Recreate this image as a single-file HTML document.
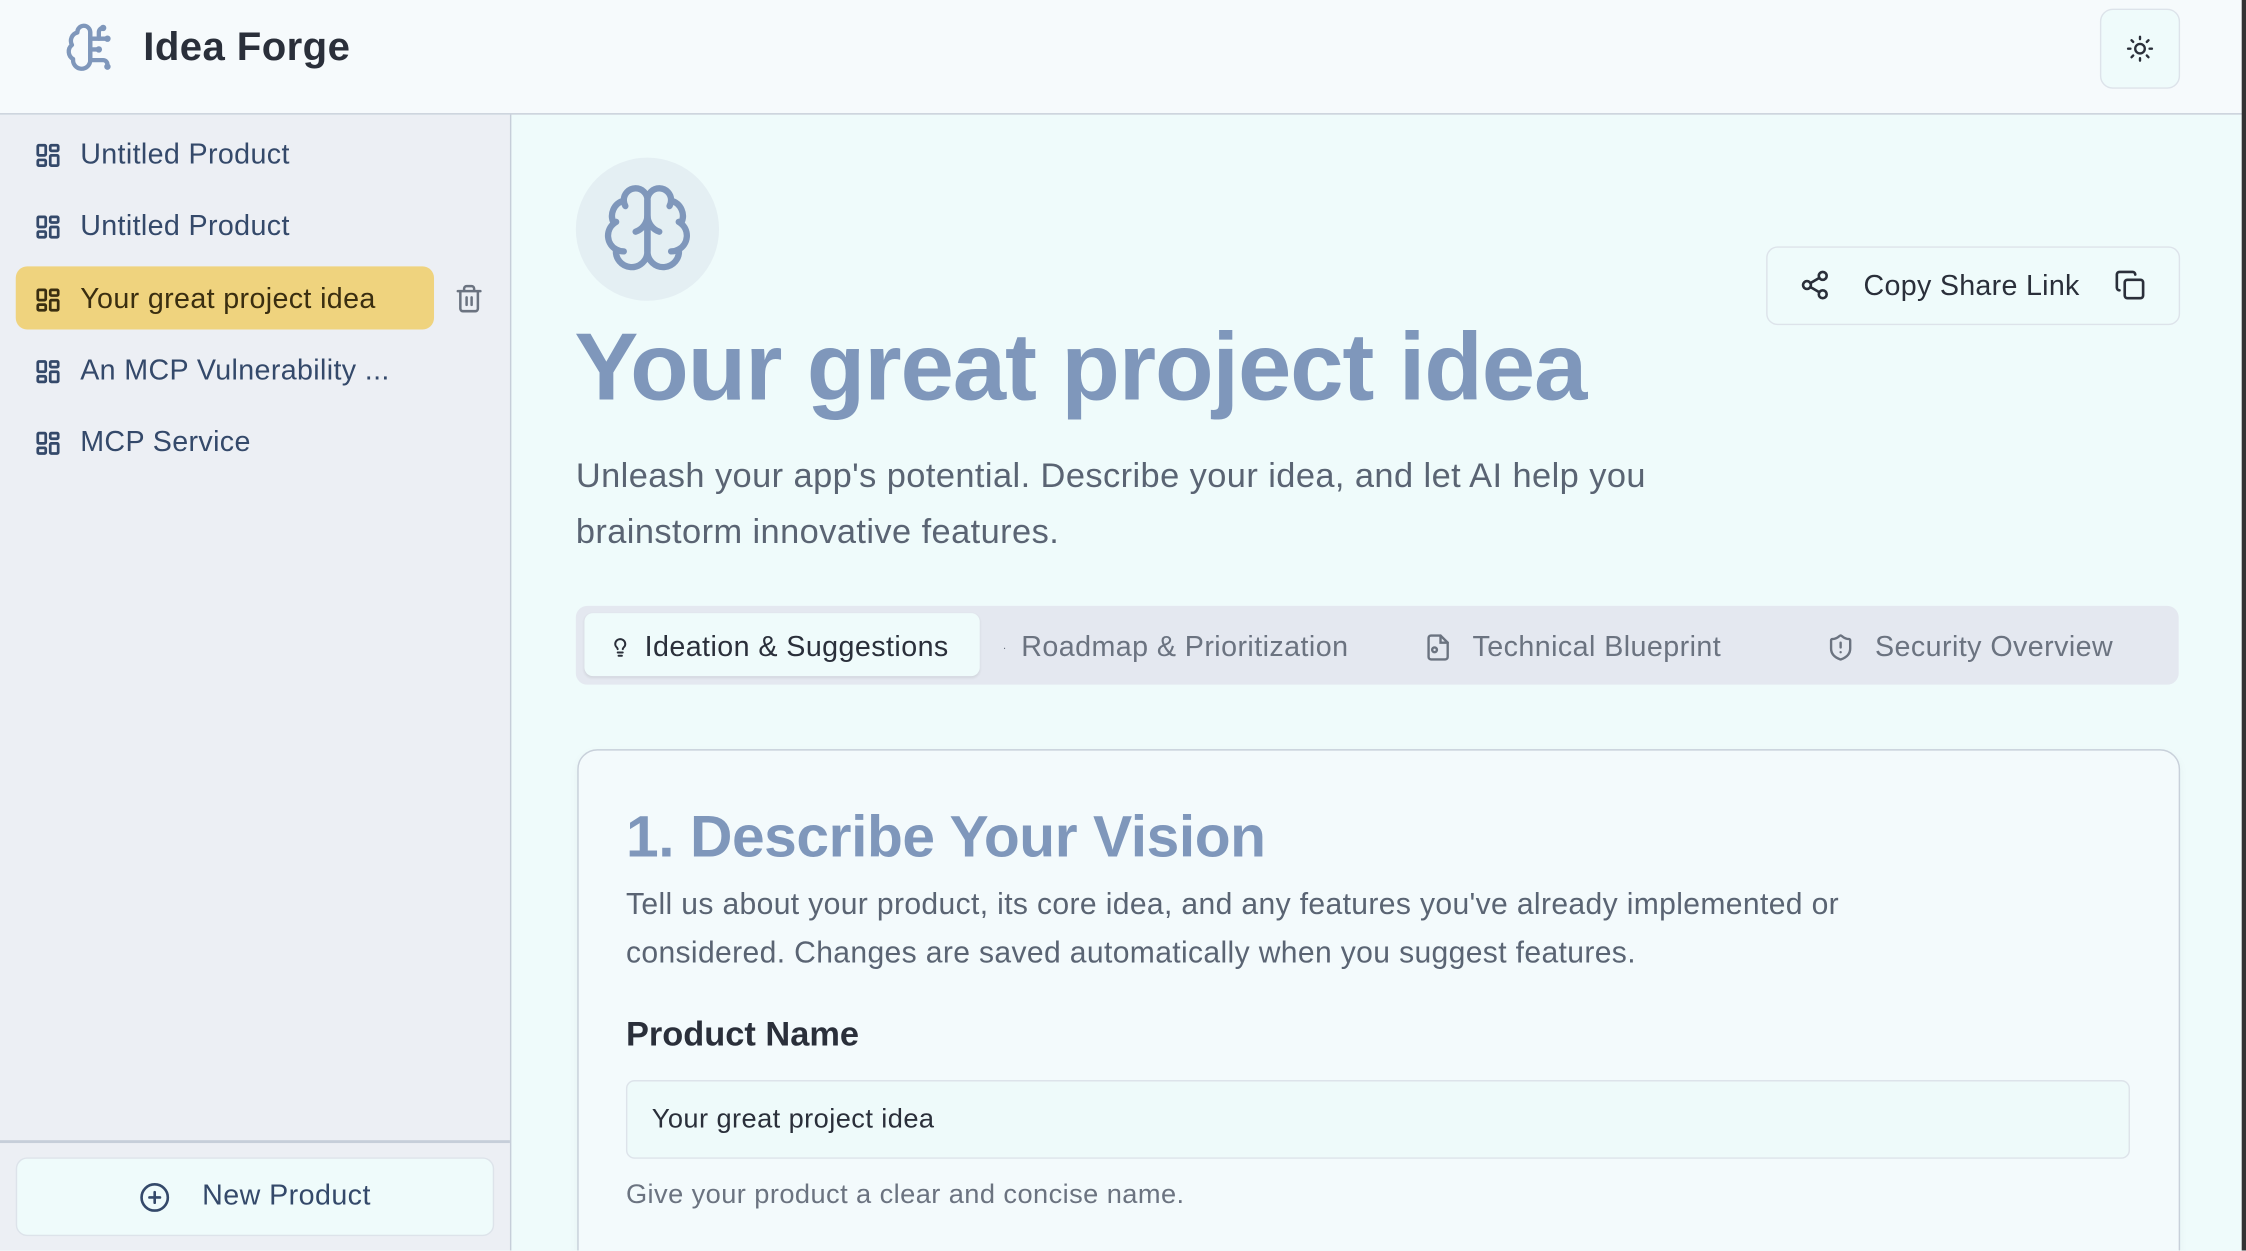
<!DOCTYPE html>
<html><head><meta charset="utf-8"><style>
html,body{margin:0;padding:0;width:2246px;height:1250px;overflow:hidden;background:#effbfb;}
#w{position:absolute;left:0;top:0;width:1568px;height:873px;transform:scale(1.43240);transform-origin:0 0;font-family:"Liberation Sans",sans-serif;background:#effbfb;overflow:hidden;}
.a{position:absolute;}
.hdr{left:0;top:0;width:1568px;height:79px;background:#f6fafc;border-bottom:1.5px solid #c6ced9;}
.side{left:0;top:80px;width:356px;height:793px;background:#eceff4;border-right:1.5px solid #c6ced9;}
.item{position:absolute;left:24px;font-size:20px;letter-spacing:.25px;color:#34496a;display:flex;align-items:center;gap:13px;height:24px;}
.tab{position:absolute;top:0;height:44px;display:flex;align-items:center;gap:10px;font-size:20px;letter-spacing:.3px;color:#6b7380;}
svg{display:block}
</style></head><body><div id="w">
<div class="a hdr"></div>
<svg class="a" style="left:45px;top:15px" width="36" height="36" viewBox="0 0 24 24" fill="none" stroke="#7f97bb" stroke-width="2" stroke-linecap="round" stroke-linejoin="round"><path d="M12 5a3 3 0 1 0-5.997.125 4 4 0 0 0-2.526 5.77 4 4 0 0 0 .556 6.588A4 4 0 1 0 12 18Z"/><path d="M12 13h4"/><path d="M12 18h6a2 2 0 0 1 2 2v1"/><path d="M12 8h8"/><path d="M16 8V5a2 2 0 0 1 2-2"/><circle cx="16" cy="13" r=".5"/><circle cx="18" cy="3" r=".5"/><circle cx="20" cy="21" r=".5"/><circle cx="20" cy="8" r=".5"/><path d="M12 5v13"/></svg>
<div class="a" style="left:100px;top:17px;font-size:28px;font-weight:bold;color:#2a2f3a;letter-spacing:.3px">Idea Forge</div>
<div class="a" style="left:1466px;top:6px;width:54px;height:54px;border:1px solid #dde3ea;border-radius:9px;background:#effbfb;"></div>
<svg class="a" style="left:1484px;top:24px" width="20" height="20" viewBox="0 0 24 24" fill="none" stroke="#2a2f3a" stroke-width="2" stroke-linecap="round"><circle cx="12" cy="12" r="4"/><path d="M12 2v2M12 20v2M4.9 4.9l1.4 1.4M17.7 17.7l1.4 1.4M2 12h2M20 12h2M6.3 17.7l-1.4 1.4M19.1 4.9l-1.4 1.4"/></svg>

<div class="a side"></div>
<div class="a" style="left:11px;top:186px;width:292px;height:44px;background:#efd37e;border-radius:8px;"></div>
<svg class="a" style="left:317px;top:197px" width="21" height="23" viewBox="0 0 24 24" fill="none" stroke="#6b7380" stroke-width="2" stroke-linecap="round"><path d="M3 6h18M19 6v14a2 2 0 0 1-2 2H7a2 2 0 0 1-2-2V6M8 6V4a2 2 0 0 1 2-2h4a2 2 0 0 1 2 2v2M10 11v6M14 11v6"/></svg>
<div id="items"></div>

<div class="a" style="left:0;top:796px;width:356px;height:1.5px;background:#c6ced9"></div>
<div class="a" style="left:11px;top:808px;width:332px;height:53px;background:#effbfb;border:1px solid #dde3ea;border-radius:8px;display:flex;align-items:center;justify-content:center;gap:22px;font-size:20px;letter-spacing:.3px;color:#34496a;">
<svg width="22" height="22" viewBox="0 0 24 24" fill="none" stroke="#34496a" stroke-width="2" stroke-linecap="round"><circle cx="12" cy="12" r="10"/><path d="M8 12h8M12 8v8"/></svg><span>New Product</span></div>

<div class="a" style="left:1565px;top:0;width:3px;height:873px;background:#333"></div>

<div class="a" style="left:402px;top:110px;width:100px;height:100px;border-radius:50%;background:#e4eff3;"></div>
<svg class="a" style="left:419px;top:126px" width="66" height="66" viewBox="0 0 24 24" fill="none" stroke="#7f97bb" stroke-width="1.6" stroke-linecap="round" stroke-linejoin="round"><path d="M12 5a3 3 0 1 0-5.997.125 4 4 0 0 0-2.526 5.77 4 4 0 0 0 .556 6.588A4 4 0 1 0 12 18Z"/><path d="M12 5a3 3 0 1 1 5.997.125 4 4 0 0 1 2.526 5.77 4 4 0 0 1-.556 6.588A4 4 0 1 1 12 18Z"/><path d="M15 13a4.5 4.5 0 0 1-3-4 4.5 4.5 0 0 1-3 4"/><path d="M17.599 6.5a3 3 0 0 0 .399-1.375"/><path d="M6.003 5.125A3 3 0 0 0 6.401 6.5"/><path d="M3.477 10.896a4 4 0 0 1 .585-.396"/><path d="M19.938 10.5a4 4 0 0 1 .585.396"/><path d="M6 18a4 4 0 0 1-1.967-.516"/><path d="M19.967 17.484A4 4 0 0 1 18 18"/><path d="M12 5v13"/></svg>

<div class="a" style="left:401px;top:218px;font-size:67px;font-weight:bold;color:#7f97bb;letter-spacing:-0.8px;white-space:nowrap;">Your great project idea</div>
<div class="a" style="left:402px;top:313px;width:830px;font-size:24px;letter-spacing:.3px;line-height:39px;color:#5a6473;">Unleash your app's potential. Describe your idea, and let AI help you brainstorm innovative features.</div>

<div class="a" style="left:1233px;top:172px;width:287px;height:53px;border:1px solid #dde3ea;border-radius:8px;background:#effbfb;"></div>
<svg class="a" style="left:1256px;top:188px" width="22" height="22" viewBox="0 0 24 24" fill="none" stroke="#2a2f3a" stroke-width="2" stroke-linecap="round"><circle cx="18" cy="5" r="3"/><circle cx="6" cy="12" r="3"/><circle cx="18" cy="19" r="3"/><path d="M8.6 13.5l6.8 4M15.4 6.5l-6.8 4"/></svg>
<div class="a" style="left:1301px;top:189px;font-size:20px;letter-spacing:.2px;color:#2a2f3a;">Copy Share Link</div>
<svg class="a" style="left:1476px;top:188px" width="22" height="22" viewBox="0 0 24 24" fill="none" stroke="#2a2f3a" stroke-width="2" stroke-linecap="round"><rect x="8" y="8" width="14" height="14" rx="2"/><path d="M4 16c-1.1 0-2-.9-2-2V4c0-1.1.9-2 2-2h10c1.1 0 2 .9 2 2"/></svg>

<div class="a" style="left:402px;top:423px;width:1119px;height:55px;background:#e4e8f0;border-radius:8px;">
 <div class="a" style="left:6px;top:5px;width:276px;height:44px;background:#effbfb;border-radius:6px;box-shadow:0 1px 2px rgba(0,0,0,.08)"></div>
 <div class="tab" style="left:24px;top:7px;color:#2a2f3a;"><svg width="14" height="18" viewBox="0 0 24 24" fill="none" stroke="#2a2f3a" stroke-width="2.4" stroke-linecap="round"><path d="M15 14c.2-1 .7-1.7 1.5-2.5A4.6 4.6 0 0 0 18 8 6 6 0 0 0 6 8c0 1 .2 2.2 1.5 3.5.7.7 1.3 1.5 1.5 2.5M9 18h6M10 22h4"/></svg><span>Ideation &amp; Suggestions</span></div>
 <div class="tab" style="left:298px;top:7px;"><span style="font-size:8px">·</span><span>Roadmap &amp; Prioritization</span></div>
 <div class="tab" style="left:592px;top:7px;gap:14px"><svg width="20" height="22" viewBox="0 0 24 24" fill="none" stroke="#6b7380" stroke-width="2" stroke-linecap="round"><path d="M14 2H6a2 2 0 0 0-2 2v16a2 2 0 0 0 2 2h12a2 2 0 0 0 2-2V8z"/><path d="M14 2v6h6"/><circle cx="9" cy="14" r="2"/></svg><span>Technical Blueprint</span></div>
 <div class="tab" style="left:873px;top:7px;gap:14px"><svg width="20" height="22" viewBox="0 0 24 24" fill="none" stroke="#6b7380" stroke-width="2" stroke-linecap="round"><path d="M20 13c0 5-3.5 7.5-7.7 9a1 1 0 0 1-.7 0C7.5 20.5 4 18 4 13V6a1 1 0 0 1 1-1c2 0 4.5-1.2 6.2-2.7a1.2 1.2 0 0 1 1.6 0C14.5 3.8 17 5 19 5a1 1 0 0 1 1 1z"/><path d="M12 8v4M12 16h.01"/></svg><span>Security Overview</span></div>
</div>

<div class="a" style="left:403px;top:523px;width:1117px;height:380px;border:1.5px solid #c8d0da;border-radius:14px;background:#f3fafc;box-shadow:0 2px 6px rgba(0,0,0,.04)"></div>
<div class="a" style="left:437px;top:561px;font-size:41px;font-weight:bold;color:#7f97bb;letter-spacing:-0.3px;">1. Describe Your Vision</div>
<div class="a" style="left:437px;top:615px;width:960px;font-size:21px;letter-spacing:.25px;line-height:34px;color:#5a6473;">Tell us about your product, its core idea, and any features you've already implemented or considered. Changes are saved automatically when you suggest features.</div>
<div class="a" style="left:437px;top:709px;font-size:24px;font-weight:bold;color:#2a2f3a;">Product Name</div>
<div class="a" style="left:437px;top:754px;width:1048px;height:53px;border:1px solid #dde3ea;border-radius:6px;background:#eefafa;"></div>
<div class="a" style="left:455px;top:771px;font-size:19px;letter-spacing:.3px;color:#2a2f3a;">Your great project idea</div>
<div class="a" style="left:437px;top:824px;font-size:19px;letter-spacing:.3px;color:#6b7380;">Give your product a clear and concise name.</div>
</div>
<script>
var n=["Untitled Product","Untitled Product","Your great project idea","An MCP Vulnerability ...","MCP Service"],ys=[108,158,209,259,309],h="";
for(var i=0;i<5;i++){var c=i==2?"#3a2e10":"#34496a";h+='<div class="item" style="top:'+(ys[i]-12)+'px;color:'+c+'"><svg width="19" height="19" viewBox="0 0 24 24" fill="none" stroke="'+c+'" stroke-width="2.4"><rect x="3" y="3" width="7" height="9" rx="1"/><rect x="14" y="3" width="7" height="5" rx="1"/><rect x="14" y="12" width="7" height="9" rx="1"/><rect x="3" y="16" width="7" height="5" rx="1"/></svg><span>'+n[i]+'</span></div>';}
document.getElementById("items").outerHTML=h;
</script>
</body></html>
